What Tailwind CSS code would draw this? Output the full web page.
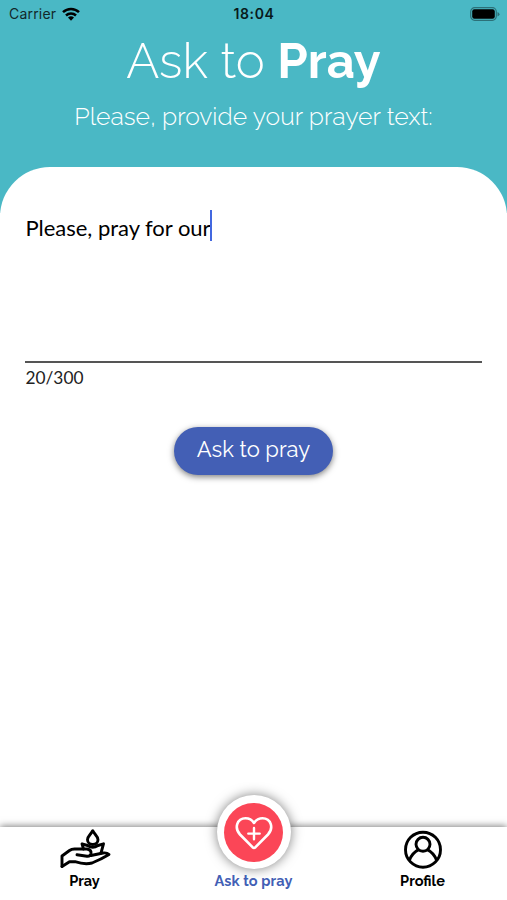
<!DOCTYPE html>
<html lang="en">
<head>
  <meta charset="UTF-8">
  <meta name="viewport" content="width=device-width, initial-scale=1.0">
  <title>Ask to Pray</title>
  <script src="https://cdn.jsdelivr.net/npm/@tailwindcss/browser@4"></script>
</head>
<body class="bg-white font-['Raleway','Lato',sans-serif] text-black">
  <div class="flex h-[900px] w-full flex-col overflow-hidden">

    <!-- Header -->
    <div class="h-[213px] shrink-0 bg-[#4ab8c5]">
      <div class="grid h-[27px] grid-cols-3 items-center pl-[9px] pr-[7px] font-['Inter',sans-serif] text-[14px]">
        <div class="flex items-center gap-[6px] text-[#12282b]">
          <span class="tracking-[0.2px]">Carrier</span>
          <svg class="h-[14px] w-[18px]" viewBox="0 0 18 14" fill="none" stroke="#000" stroke-width="2.5">
            <path d="M1 5.2a11.6 11.6 0 0 1 16 0M4 8.5a7.2 7.2 0 0 1 10 0" />
            <path d="M6 10.6a4.3 4.3 0 0 1 6 0L9 13.7z" fill="#000" stroke="none" />
          </svg>
        </div>
        <div class="-ml-px text-center font-semibold tracking-[0.6px] text-[#081a1c]">18:04</div>
        <svg class="h-[14px] w-[30px] justify-self-end" viewBox="0 0 30 14">
          <rect x="0.7" y="0.7" width="25.6" height="12.6" rx="4" fill="none" stroke="#2c7078" stroke-width="1.2" />
          <rect x="2.2" y="2.2" width="22.6" height="9.6" rx="2.2" fill="#000" />
          <path d="M27.5 5v4.5q2-.8 2-2.25T27.5 5" fill="#2c7078" />
        </svg>
      </div>
      <h1 class="mt-[9px] text-center text-[49px] leading-[50px] font-light text-white">Ask to <b class="font-bold">Pray</b></h1>
      <p class="mt-[15px] text-center text-[24.7px] leading-[32px] font-light text-white">Please, provide your prayer text:</p>
    </div>

    <!-- Form -->
    <div class="-mt-[46px] flex flex-1 flex-col items-center rounded-t-[50px] bg-white px-[25px] pt-[43px]">
      <div class="flex h-[153px] w-full items-start border-b-2 border-[#555] pl-[0.5px] font-['Lato',sans-serif] text-[22px] leading-[36px]">
        <span class="tracking-[-0.03px]">Please, pray for our</span><span class="-ml-[1px] h-[31px] w-[2.5px] bg-[#4368e0]"></span>
      </div>
      <div class="mt-[3px] w-full pl-[0.5px] font-['Lato',sans-serif] text-[17.3px] leading-[23px] text-[#222]">20/300</div>
      <button class="mt-[38px] h-[48px] w-[159px] rounded-full bg-[#435fb5] pb-[3px] text-[22px] text-white shadow-[0_2px_6px_rgba(0,0,0,0.5)]">Ask to pray</button>
    </div>

    <!-- Tab bar -->
    <div class="relative grid h-[73px] shrink-0 grid-cols-3 bg-white text-center text-[14.5px] leading-[18px] font-bold shadow-[0_-1px_7px_rgba(0,0,0,0.5)]">
      <div class="flex flex-col items-center pt-[2px]">
        <svg class="h-[42px] w-[52px]" viewBox="0 0 52 42" fill="none" stroke="#000" stroke-width="2.9" stroke-linejoin="round" stroke-linecap="round">
          <path d="M3 37.5V27L10.5 21.5Q12.5 20 15.5 20H28Q32.5 20.8 32 24.5Q31.5 27.4 28 27.2L18 25.7" />
          <path d="M3 37.5L10.5 32.7H16Q26 36 33 34Q42 30.5 50 25.6Q48 23.5 44 24L32 26.5" />
          <path d="M24.5 20L23 14.8L28.5 16.5Q33.7 20 39 16.5L44.5 14.8L42 24" />
          <path d="M33.7 1.7C32 5.5 28.5 7 28.5 10.8C28.5 17 39 17 39 10.8C39 7 35.5 5.5 33.7 1.7z" />
        </svg>
        <span class="mt-[1px]">Pray</span>
      </div>
      <div class="flex flex-col items-center text-[#435fb5]">
        <div class="-mt-[32px] flex h-[74px] w-[74px] items-center justify-center rounded-full bg-white shadow-[0_0_12px_rgba(0,0,0,0.5)]">
          <div class="flex h-[59px] w-[59px] items-center justify-center rounded-full bg-[#fb4657]">
            <svg class="h-[36px] w-[40px]" viewBox="0 0 40 36" fill="none" stroke="#fff" stroke-width="2.6" stroke-linejoin="round" stroke-linecap="round">
              <path d="M18.5 33.2L6 20.5C0 14 3 4.2 11.5 4.2Q17 4.2 20 9Q23 4.2 28.5 4.2C37 4.2 40 14 34 20.5L21.5 33.2Q20 34.5 18.5 33.2z" />
              <path d="M20 14V25.3M14.3 19.6H25.7" stroke-width="2.4" />
            </svg>
          </div>
        </div>
        <span class="mt-[3px] tracking-[0.1px]">Ask to pray</span>
      </div>
      <div class="flex flex-col items-center pt-[3px]">
        <svg class="h-[40px] w-[40px]" viewBox="0 0 40 40" fill="none" stroke="#000" stroke-width="2.9">
          <circle cx="20" cy="19.7" r="17.5" />
          <circle cx="20" cy="14.3" r="7" />
          <path d="M6.3 30.5C8 25.5 11 22 15.7 19.6M33.7 30.5C32 25.5 29 22 24.3 19.6" />
        </svg>
        <span class="mt-[2px]">Profile</span>
      </div>
    </div>
  </div>
</body>
</html>
